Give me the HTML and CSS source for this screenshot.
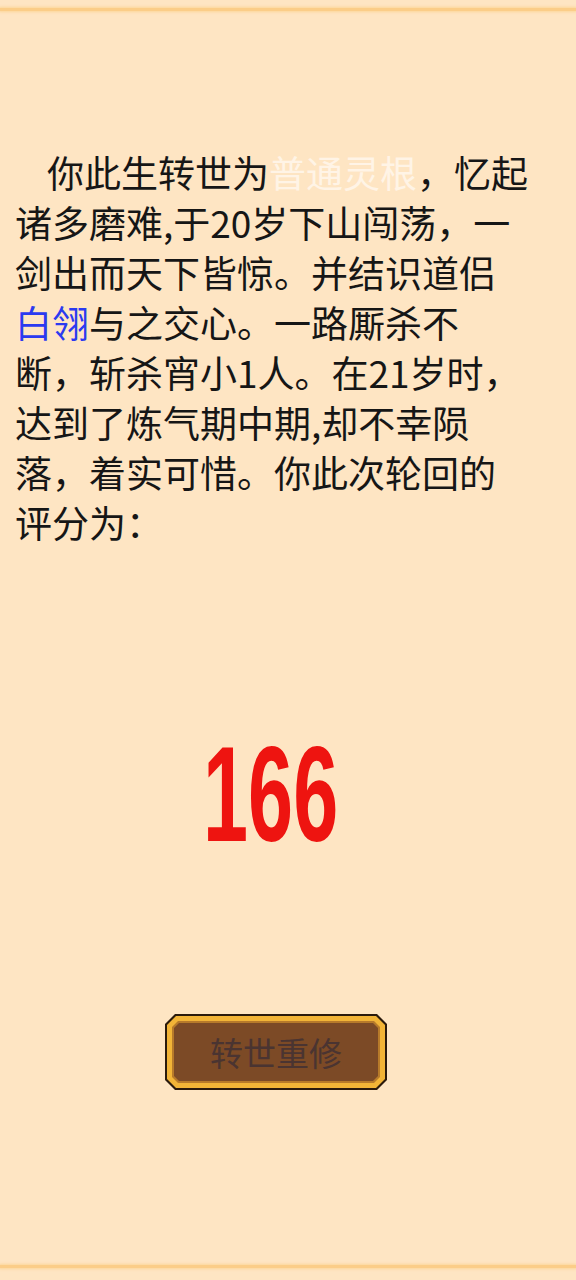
FILE: index.html
```html
<!DOCTYPE html>
<html lang="zh">
<head>
<meta charset="utf-8">
<title>轮回评分</title>
<link rel="stylesheet" href="styles.css">
</head>
<body>
<div class="page">
  <div class="rule rule-top"></div>
  <p class="story">你此生转世为<span class="hl-root">普通灵根</span>，忆起诸多磨难,于20岁下山闯荡，一剑出而天下皆惊。并结识道侣<span class="hl-mate">白翎</span>与之交心。一路厮杀不断，斩杀宵小1人。在21岁时，达到了炼气期中期,却不幸陨落，着实可惜。你此次轮回的评分为：</p>
  <div class="score-wrap"><span class="score">166</span></div>
  <div class="btn-wrap">
    <button class="btn" type="button">
      <span class="btn-gold">
        <span class="btn-line">
          <span class="btn-face">转世重修</span>
        </span>
      </span>
    </button>
  </div>
  <div class="spacer"></div>
  <div class="rule rule-bottom"></div>
</div>
</body>
</html>
```

FILE: styles.css
```css
html, body {
  margin: 0;
  padding: 0;
  background: #fee5c3;
}
.page {
  width: 576px;
  height: 1280px;
  display: flex;
  flex-direction: column;
  overflow: hidden;
  font-family: "Noto Sans CJK SC", "Noto Sans", sans-serif;
}
.rule {
  height: 3px;
  background: #fbcd88;
  box-shadow: 0 0 3px 1px #fcd596;
  flex: none;
}
.rule-top {
  margin-top: 8px;
}
.rule-bottom {
  margin-bottom: 12px;
}
.story {
  margin: 136px 0 0 0;
  padding: 0 0 0 15px;
  width: 516px;
  font-size: 37px;
  line-height: 50px;
  color: #161616;
  text-indent: 32px;
  line-break: strict;
}
.hl-root {
  color: #fff4e6;
}
.hl-mate {
  color: #2b3af0;
}
.score-wrap {
  margin-top: 180px;
  height: 135px;
  display: flex;
  justify-content: center;
  padding-right: 34px;
}
.score {
  display: inline-block;
  font-family: "Liberation Sans", Arial, sans-serif;
  font-weight: bold;
  font-size: 135px;
  line-height: 135px;
  color: #ee1410;
  transform: scaleX(0.6);
}
.btn-wrap {
  margin-top: 152px;
  display: flex;
  justify-content: center;
  padding-right: 24px;
}
.btn {
  width: 222px;
  height: 76px;
  padding: 2px;
  border: none;
  background: #2a1a0c;
  clip-path: polygon(10px 0, calc(100% - 10px) 0, 100% 10px, 100% calc(100% - 10px), calc(100% - 10px) 100%, 10px 100%, 0 calc(100% - 10px), 0 10px);
  display: flex;
  cursor: pointer;
}
.btn-gold {
  flex: 1;
  display: flex;
  padding: 5px;
  background: #f2b437;
  clip-path: polygon(9px 0, calc(100% - 9px) 0, 100% 9px, 100% calc(100% - 9px), calc(100% - 9px) 100%, 9px 100%, 0 calc(100% - 9px), 0 9px);
}
.btn-line {
  flex: 1;
  display: flex;
  padding: 2px;
  background: #b77a2a;
  clip-path: polygon(6px 0, calc(100% - 6px) 0, 100% 6px, 100% calc(100% - 6px), calc(100% - 6px) 100%, 6px 100%, 0 calc(100% - 6px), 0 6px);
}
.btn-face {
  flex: 1;
  display: flex;
  align-items: center;
  justify-content: center;
  background: #7c4a26;
  clip-path: polygon(5px 0, calc(100% - 5px) 0, 100% 5px, 100% calc(100% - 5px), calc(100% - 5px) 100%, 5px 100%, 0 calc(100% - 5px), 0 5px);
  font-family: "Noto Sans CJK SC", sans-serif;
  font-size: 33px;
  color: #4a3431;
  letter-spacing: 0;
}
.spacer {
  flex: 1;
}
```
